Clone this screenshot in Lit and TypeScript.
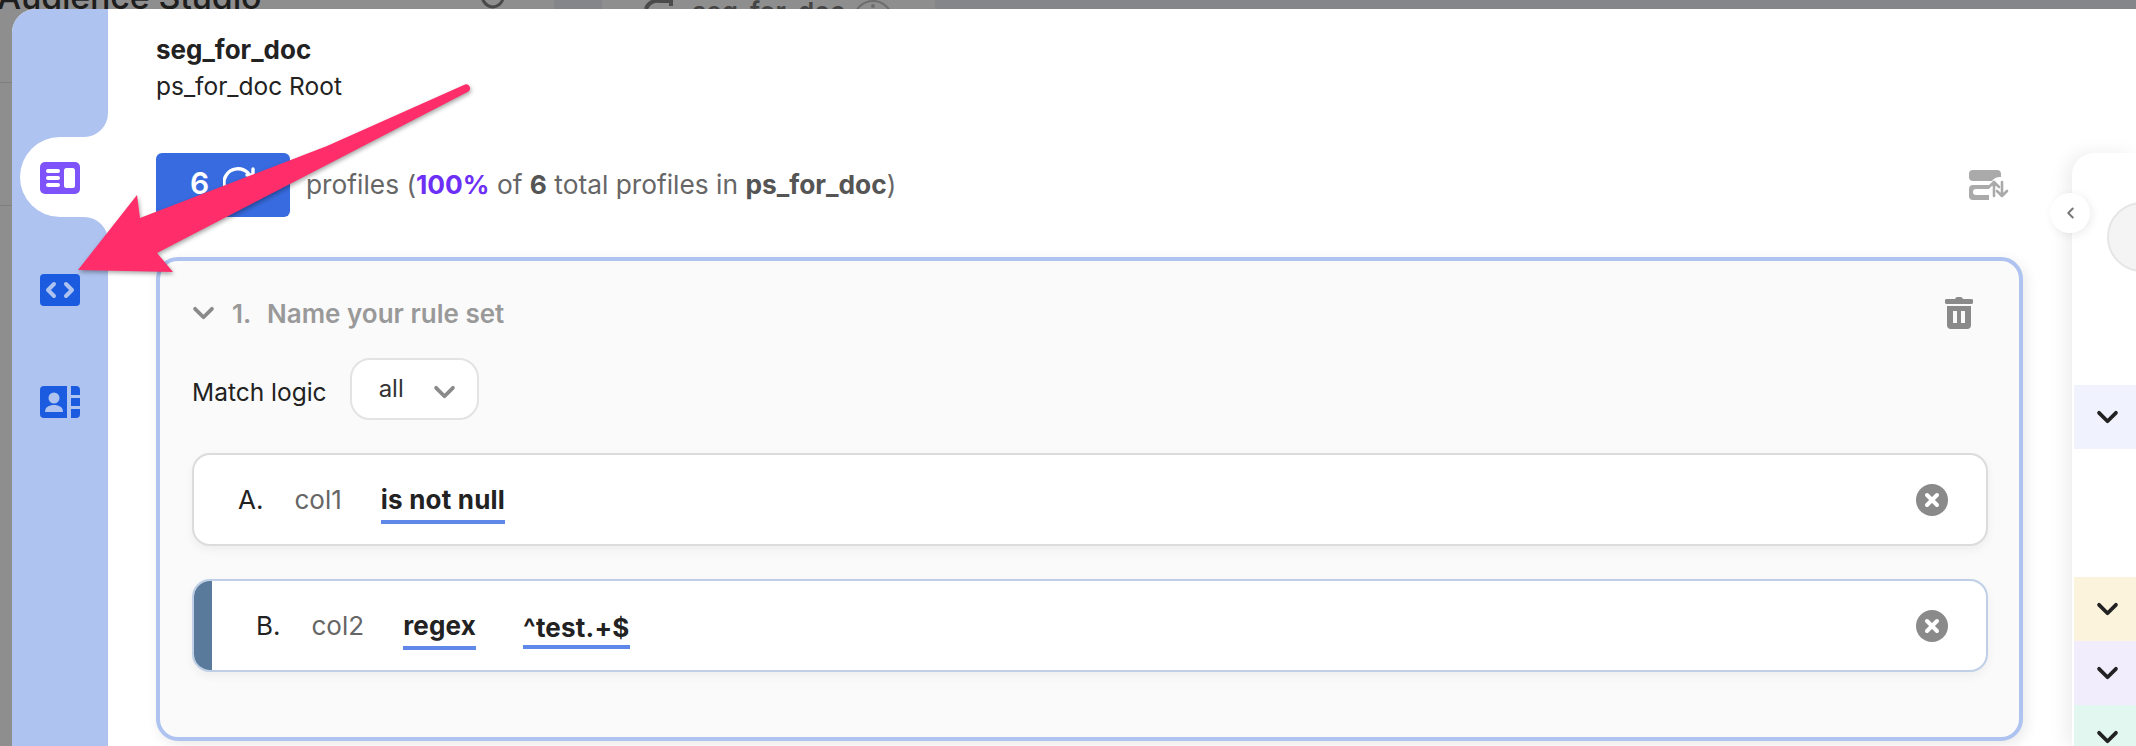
import { html, css, LitElement } from 'lit';
import { customElement, state } from 'lit/decorators.js';

type Rule = { label: string; column: string; op: string; value?: string; marked?: boolean };

const chevron = html`<svg viewBox="0 0 24 16" width="23" height="15" fill="none" stroke="currentColor" stroke-width="4" stroke-linecap="round" stroke-linejoin="round"><path d="M3 3l9 9 9-9" /></svg>`;

const closeIcon = html`<svg viewBox="0 0 32 32" width="32" height="32">
  <circle cx="16" cy="16" r="16" fill="#8a8a8a" />
  <path d="M11 11l10 10M21 11L11 21" stroke="#fff" stroke-width="4" stroke-linecap="round" />
</svg>`;

@customElement('app-root')
export class AppRoot extends LitElement {
  static styles = css`
    :host {
      display: block;
      position: relative;
      width: 2136px;
      height: 746px;
      overflow: hidden;
      background: #8e8e8e;
      font-family: Inter, 'Liberation Sans', sans-serif;
      color: #222;
    }
    .strip {
      display: flex;
      height: 9px;
      overflow: hidden;
    }
    .page-title {
      width: 478px;
      flex: none;
      margin-top: -25px;
      margin-left: -3px;
      font-size: 34px;
      line-height: 44px;
      font-weight: 500;
      letter-spacing: -0.2px;
      color: #1e1e1e;
      white-space: nowrap;
    }
    .strip-icon {
      width: 79px;
      flex: none;
      margin-top: -10px;
    }
    .strip-block {
      width: 48px;
      flex: none;
      background: #84868a;
    }
    .strip-tab {
      width: 333px;
      flex: none;
      display: flex;
      gap: 19px;
      padding-left: 41px;
      box-sizing: border-box;
    }
    .strip-tab span {
      width: 142px;
      margin-top: -3px;
      font-size: 26px;
      line-height: 30px;
      font-weight: 600;
      color: #454545;
      white-space: nowrap;
    }
    .strip-rest {
      flex: 1;
      background: #85868a;
    }
    .stage {
      display: flex;
    }
    .gutter {
      width: 12px;
      flex: none;
    }
    .gutter div {
      box-sizing: border-box;
      height: 74px;
      border-bottom: 1px solid #7f7f7f;
    }
    .gutter div + div {
      height: 123px;
    }
    .modal {
      flex: 1;
      display: flex;
      height: 737px;
      min-width: 0;
      background: #fff;
      border-top-left-radius: 24px;
      overflow: hidden;
    }
    .rail {
      width: 96px;
      flex: none;
      display: flex;
      flex-direction: column;
    }
    .rail-top {
      height: 128px;
      background: #aec3ef;
      border-bottom-right-radius: 24px;
    }
    .rail-active {
      height: 80px;
      padding-left: 8px;
      background: #aec3ef;
    }
    .rail-active div {
      height: 100%;
      box-sizing: border-box;
      display: flex;
      align-items: center;
      padding: 2px 0 0 20px;
      background: #fff;
      border-radius: 40px 0 0 40px;
    }
    .rail-rest {
      flex: 1;
      display: flex;
      flex-direction: column;
      gap: 80px;
      padding: 57px 0 0 28px;
      background: #aec3ef;
      border-top-right-radius: 24px;
    }
    .rail svg {
      display: block;
    }
    .main {
      flex: 1;
      display: flex;
      flex-direction: column;
      padding-left: 48px;
      min-width: 0;
    }
    header {
      height: 144px;
      padding-top: 27px;
      box-sizing: border-box;
    }
    .title {
      font-size: 26px;
      line-height: 28px;
      font-weight: 700;
    }
    .subtitle {
      margin-top: 9px;
      font-size: 24.5px;
      line-height: 26px;
      color: #222;
    }
    .body {
      flex: 1;
      display: flex;
      gap: 49px;
      min-height: 0;
    }
    .column {
      width: 1867px;
      flex: none;
    }
    .stats {
      display: flex;
      align-items: center;
      height: 64px;
    }
    .count {
      width: 134px;
      height: 64px;
      flex: none;
      display: flex;
      align-items: center;
      gap: 14px;
      padding: 0 0 4px 34px;
      box-sizing: border-box;
      background: #386bdf;
      border-radius: 6px;
      color: #fff;
      font-size: 30px;
      font-weight: 600;
    }
    .summary {
      flex: 1;
      margin: 0 0 2px 16px;
      font-size: 26.3px;
      color: #666;
      white-space: nowrap;
    }
    .summary b {
      color: #555;
      font-weight: 700;
    }
    .summary b.pct {
      color: #6d2ff5;
    }
    .swap {
      margin: 0 14px 0 0;
      display: block;
    }
    .card {
      box-sizing: border-box;
      height: 484px;
      margin-top: 40px;
      padding: 36px 31px 0 32px;
      background: #fafafa;
      border: 4px solid #aec3ef;
      border-radius: 22px;
      box-shadow: 3px 4px 14px rgba(0, 0, 0, 0.09);
    }
    .card-head {
      display: flex;
      align-items: center;
      height: 32px;
      color: #999;
      font-size: 26px;
      font-weight: 600;
    }
    .card-head .num {
      width: 35px;
      margin-left: 17px;
    }
    .card-head .name {
      flex: 1;
    }
    .card-head .trash {
      margin-right: 15px;
      display: block;
    }
    .card-head svg:first-child {
      color: #8a8a8a;
    }
    .logic {
      display: flex;
      align-items: center;
      margin-top: 29px;
      font-size: 24.5px;
    }
    .logic > span {
      margin-top: 6px;
    }
    .select {
      width: 129px;
      height: 62px;
      box-sizing: border-box;
      display: flex;
      align-items: center;
      justify-content: space-between;
      margin-left: 23px;
      padding: 0 21px 0 27px;
      background: #fff;
      border: 2px solid #e3e3e3;
      border-radius: 20px;
      font-size: 24px;
      color: #333;
    }
    .select span {
      margin-top: -2px;
    }
    .select svg {
      color: #8a8a8a;
      margin-top: 7px;
    }
    .rule {
      position: relative;
      display: flex;
      align-items: center;
      height: 93px;
      margin-top: 33px;
      padding: 0 38px 0 44px;
      box-sizing: border-box;
      background: #fff;
      border: 2px solid #dcdcdc;
      border-radius: 18px;
      box-shadow: 0 4px 10px rgba(0, 0, 0, 0.05);
      font-size: 26px;
    }
    .rule.marked {
      border-color: #bfd0e6;
      padding-left: 62px;
      overflow: hidden;
    }
    .rule.marked::before {
      content: '';
      position: absolute;
      left: -2px;
      top: -2px;
      bottom: -2px;
      width: 20px;
      background: #5a7a9c;
    }
    .rule .label {
      margin-right: 31px;
    }
    .rule .col {
      color: #666;
      margin-right: 39px;
    }
    .rule .tok {
      font-weight: 700;
      line-height: 28px;
      letter-spacing: 0.2px;
      margin-right: 47px;
      margin-top: 11px;
      padding-bottom: 6px;
      border-bottom: 4px solid #5f88e8;
    }
    .rule .tok.value {
      padding-bottom: 3px;
    }
    .rule .grow {
      flex: 1;
    }
    .rule svg {
      display: block;
    }
    aside {
      position: relative;
      width: 64px;
      flex: none;
      background: #fff;
      border-top-left-radius: 22px;
      box-shadow: -6px 0 18px rgba(0, 0, 0, 0.07);
    }
    .panel {
      height: 100%;
      overflow: hidden;
      padding-left: 2px;
      border-top-left-radius: 22px;
    }
    .avatar {
      width: 70px;
      height: 70px;
      margin: 49px 0 0 33px;
      box-sizing: border-box;
      background: #f4f4f4;
      border: 2px solid #e6e6e6;
      border-radius: 50%;
    }
    .band {
      width: 62px;
      height: 64px;
      display: flex;
      align-items: center;
      padding-left: 22px;
      box-sizing: border-box;
      color: #222;
    }
    .collapse {
      position: absolute;
      left: -22px;
      top: 40px;
      width: 40px;
      height: 40px;
      display: flex;
      align-items: center;
      justify-content: center;
      background: #fff;
      border-radius: 50%;
      box-shadow: 2px 2px 10px rgba(0, 0, 0, 0.08);
    }
    .pointer {
      position: absolute;
      left: 0;
      top: 0;
      pointer-events: none;
      filter: drop-shadow(1px 2px 2px rgba(0, 0, 0, 0.35));
    }
  `;

  @state() private rules: Rule[] = [
    { label: 'A.', column: 'col1', op: 'is not null' },
    { label: 'B.', column: 'col2', op: 'regex', value: '^test.+$', marked: true },
  ];

  private renderRule(rule: Rule) {
    return html`
      <div class="rule ${rule.marked ? 'marked' : ''}">
        <span class="label">${rule.label}</span>
        <span class="col">${rule.column}</span>
        <span class="tok">${rule.op}</span>
        ${rule.value ? html`<span class="tok value">${rule.value}</span>` : ''}
        <span class="grow"></span>
        ${closeIcon}
      </div>
    `;
  }

  render() {
    return html`
      <div class="strip">
        <div class="page-title">Audience Studio</div>
        <svg class="strip-icon" viewBox="0 0 79 20" height="20">
          <path d="M8 0a12 12 0 0 0 10 17 12 12 0 0 0 10-8" fill="none" stroke="#4a4a4a" stroke-width="3" />
        </svg>
        <div class="strip-block"></div>
        <div class="strip-tab">
          <svg viewBox="0 0 30 9" width="30" height="9"><path d="M3 9a12 12 0 0 1 14-8h11v5" fill="none" stroke="#4a4a4a" stroke-width="4" /></svg>
          <span>seg_for_doc</span>
          <svg viewBox="0 0 40 9" width="40" height="9"><circle cx="20" cy="20" r="19" fill="none" stroke="#6d6d6d" stroke-width="2" /><circle cx="20" cy="6" r="2" fill="#6d6d6d" /></svg>
        </div>
        <div class="strip-rest"></div>
      </div>

      <div class="stage">
        <div class="gutter"><div></div><div></div></div>
        <div class="modal">
          <nav class="rail">
            <div class="rail-top"></div>
            <div class="rail-active">
              <div>
                <svg viewBox="0 0 40 32" width="40" height="32">
                  <rect width="40" height="32" rx="5" fill="#7e53fb" />
                  <rect x="6" y="7" width="14" height="4" rx="2" fill="#fff" />
                  <rect x="6" y="14" width="14" height="4" rx="2" fill="#fff" />
                  <rect x="6" y="21" width="14" height="4" rx="2" fill="#fff" />
                  <rect x="24" y="6" width="11" height="20" rx="2.5" fill="#fff" />
                </svg>
              </div>
            </div>
            <div class="rail-rest">
              <svg viewBox="0 0 40 32" width="40" height="32">
                <rect width="40" height="32" rx="4" fill="#1a5be0" />
                <path d="M14 10l-6 6 6 6M26 10l6 6-6 6" fill="none" stroke="#aec3ef" stroke-width="4" stroke-linecap="round" stroke-linejoin="round" />
              </svg>
              <svg viewBox="0 0 40 32" width="40" height="32">
                <path d="M4 0h23v32H4a4 4 0 0 1-4-4V4a4 4 0 0 1 4-4z" fill="#1a5be0" />
                <path d="M31 0h5a4 4 0 0 1 4 4v5h-9z M31 12h9v8h-9z M31 23h9v5a4 4 0 0 1-4 4h-5z" fill="#1a5be0" />
                <circle cx="14" cy="12" r="5.5" fill="#aec3ef" />
                <path d="M5 26c0-5 4-7 9-7s9 2 9 7z" fill="#aec3ef" />
              </svg>
            </div>
          </nav>

          <section class="main">
            <header>
              <div class="title">seg_for_doc</div>
              <div class="subtitle">ps_for_doc Root</div>
            </header>
            <div class="body">
              <div class="column">
                <div class="stats">
                  <div class="count">
                    6
                    <svg viewBox="0 0 32 32" width="32" height="32" fill="none" stroke="#fff" stroke-width="3.4" stroke-linecap="round">
                      <path d="M29 16a14 14 0 1 1-4-10" />
                      <path d="M30 2v6h-6" />
                    </svg>
                  </div>
                  <div class="summary">
                    profiles (<b class="pct">100%</b> of <b>6</b> total profiles in <b>ps_for_doc</b>)
                  </div>
                  <svg class="swap" viewBox="0 0 40 31" width="40" height="31">
                    <path d="M4 0h24a4 4 0 0 1 4 4v3a10 10 0 0 0-9 4H4a4 4 0 0 1-4-4V4a4 4 0 0 1 4-4z" fill="#aaa" />
                    <path d="M4 15h16v4H7a2 2 0 0 0 0 6h13v5H4a4 4 0 0 1-4-4V19a4 4 0 0 1 4-4z" fill="#aaa" />
                    <path d="M26 26V12M21 17l5-5 5 5M34 12v14M29 21l5 5 5-5" transform="translate(-1 0)" fill="none" stroke="#aaa" stroke-width="2.6" stroke-linecap="round" stroke-linejoin="round" />
                  </svg>
                </div>

                <div class="card">
                  <div class="card-head">
                    ${chevron}
                    <span class="num">1.</span>
                    <span class="name">Name your rule set</span>
                    <svg class="trash" viewBox="0 0 28 32" width="28" height="32">
                      <path d="M10 2a3 3 0 0 1 3-2h2a3 3 0 0 1 3 2h8a2 2 0 0 1 0 5H2a2 2 0 0 1 0-5z" fill="#8a8a8a" />
                      <path fill-rule="evenodd" d="M2 9h24v19a4 4 0 0 1-4 4H6a4 4 0 0 1-4-4z M8 14v12h4V14z M16 14v12h4V14z" fill="#8a8a8a" />
                    </svg>
                  </div>
                  <div class="logic">
                    <span>Match logic</span>
                    <div class="select"><span>all</span>${chevron}</div>
                  </div>
                  ${this.rules.map((rule) => this.renderRule(rule))}
                </div>
              </div>

              <aside>
                <div class="collapse">
                  <svg viewBox="0 0 12 18" width="9" height="14" fill="none" stroke="#777" stroke-width="2.6" stroke-linecap="round" stroke-linejoin="round"><path d="M9 3L3 9l6 6" /></svg>
                </div>
                <div class="panel">
                  <div class="avatar"></div>
                  <div class="band" style="margin-top:113px;background:#f0f3fd">${chevron}</div>
                  <div class="band" style="margin-top:128px;background:#fcf3dd">${chevron}</div>
                  <div class="band" style="background:#f1edfc">${chevron}</div>
                  <div class="band" style="background:#e3f7f1">${chevron}</div>
                </div>
              </aside>
            </div>
          </section>
        </div>
      </div>

      <svg class="pointer" width="2136" height="746" viewBox="0 0 2136 746">
        <path d="M465 84.5a4 4 0 0 1 3.5 7L157 253l16 19-95-2 59-75 3 23 187-72z" fill="#ff2d6a" />
      </svg>
    `;
  }
}
